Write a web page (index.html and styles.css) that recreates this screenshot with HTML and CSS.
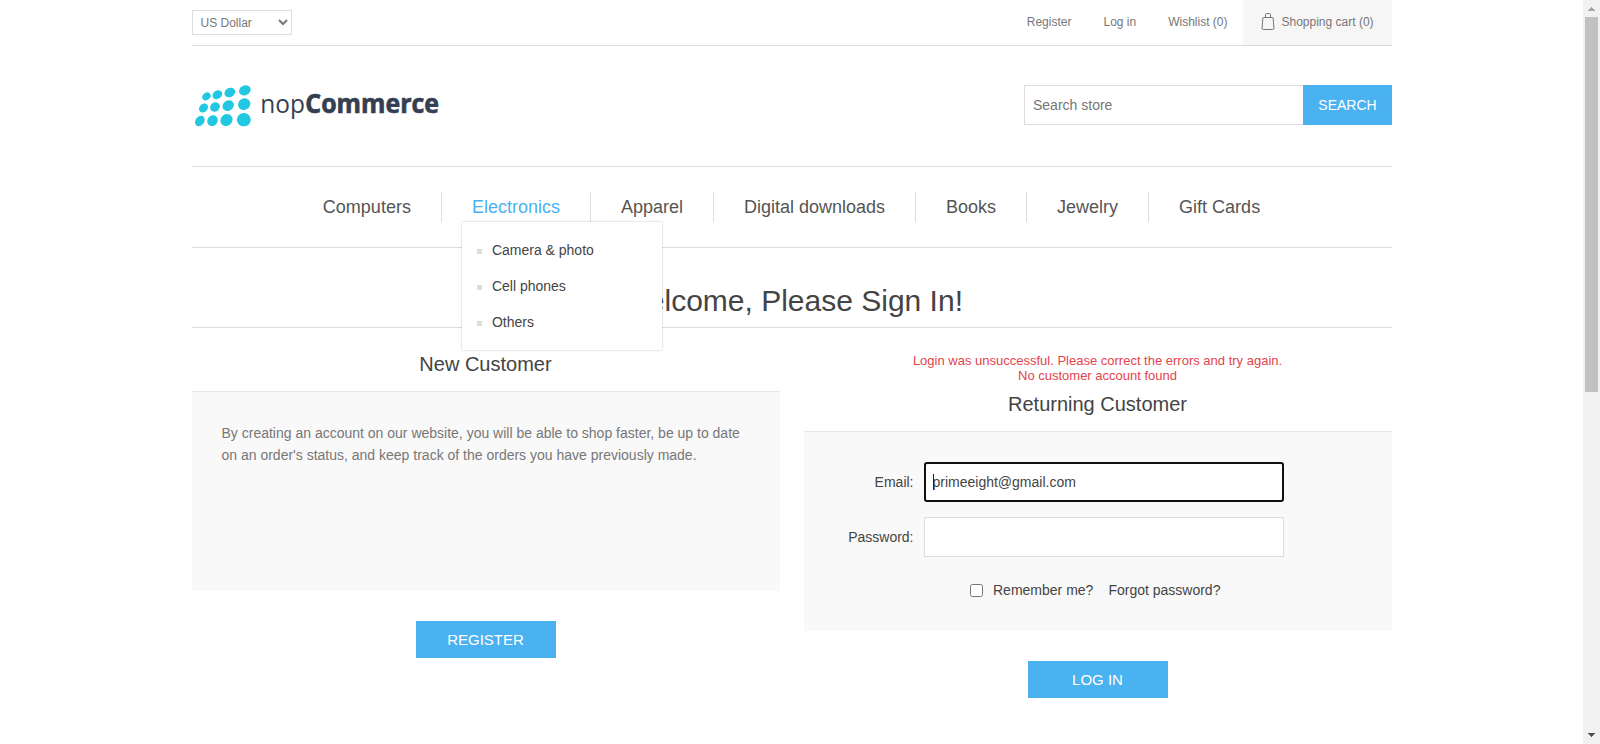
FILE: index.html
```html
<!DOCTYPE html>
<html lang="en">
<head>
<meta charset="utf-8">
<title>nopCommerce demo store. Login</title>
<link rel="stylesheet" href="styles.css">
</head>
<body>
<div class="viewport">
<div class="page">
  <header>
    <div class="header-upper">
      <select class="currency" aria-label="Currency"><option>US Dollar</option><option>Euro</option></select>
      <nav class="header-links">
        <a>Register</a><a>Log in</a><a>Wishlist (0)</a>
        <a class="cart">
          <svg class="bag" width="14" height="17" viewBox="0 0 14 17" fill="none" stroke="#777"><path d="M2.500 4.500h9q.5 0 .6.5l.9 10q.1 1.500-1.300 1.500H2.300q-1.400 0-1.300-1.500L1.900 5q.1-.5.6-.5z"/><path d="M4.500 4.500V1.500q0-1 1-1h3q1 0 1 1v3"/></svg>
          Shopping cart (0)
        </a>
      </nav>
    </div>
    <div class="header-lower">
      <svg class="logo" width="250" height="52" viewBox="0 0 750 156" role="img" aria-label="nopCommerce">
        <g fill="#22c8e2">
          <ellipse cx="43.500" cy="37" rx="13.500" ry="10.500" transform="rotate(-35 43.500 37)"/>
          <ellipse cx="76" cy="32" rx="15.500" ry="12.500" transform="rotate(-35 76 32)"/>
          <ellipse cx="113.500" cy="25.500" rx="17" ry="13.500" transform="rotate(-30 113.500 25.500)"/>
          <ellipse cx="158.500" cy="19" rx="18" ry="14.500" transform="rotate(-25 158.500 19)"/>
          <ellipse cx="34.500" cy="72" rx="15" ry="12" transform="rotate(-45 34.500 72)"/>
          <ellipse cx="69" cy="69" rx="15.500" ry="13.500" transform="rotate(-40 69 69)"/>
          <ellipse cx="108.500" cy="65" rx="18" ry="15" transform="rotate(-35 108.500 65)"/>
          <ellipse cx="156.500" cy="60.500" rx="19" ry="17" transform="rotate(-30 156.500 60.500)"/>
          <ellipse cx="23.500" cy="111" rx="17" ry="13" transform="rotate(-55 23.500 111)"/>
          <ellipse cx="61.500" cy="110" rx="17" ry="15" transform="rotate(-50 61.500 110)"/>
          <ellipse cx="103.500" cy="108" rx="19" ry="17.500" transform="rotate(-45 103.500 108)"/>
          <ellipse cx="155.500" cy="107" rx="21" ry="20"/>
        </g>
        <text class="logo-thin" x="205" y="87" textLength="134" lengthAdjust="spacingAndGlyphs">nop</text>
        <text class="logo-bold" x="340" y="87" textLength="401" lengthAdjust="spacingAndGlyphs">Commerce</text>
      </svg>
      <form class="search">
        <input class="search-text" type="text" placeholder="Search store">
        <button class="search-button" type="button">SEARCH</button>
      </form>
    </div>
  </header>
  <ul class="menu">
    <li><a>Computers</a></li>
    <li class="active"><a>Electronics</a>
      <ul class="sublist">
        <li>Camera &amp; photo</li>
        <li>Cell phones</li>
        <li>Others</li>
      </ul>
    </li>
    <li><a>Apparel</a></li>
    <li><a>Digital downloads</a></li>
    <li><a>Books</a></li>
    <li><a>Jewelry</a></li>
    <li><a>Gift Cards</a></li>
  </ul>
  <main>
    <h1>Welcome, Please Sign In!</h1>
    <div class="columns">
      <section class="block">
        <h2>New Customer</h2>
        <div class="panel intro">By creating an account on our website, you will be able to shop faster, be up to date on an order's status, and keep track of the orders you have previously made.</div>
        <button class="action" type="button">REGISTER</button>
      </section>
      <section class="block">
        <div class="error">Login was unsuccessful. Please correct the errors and try again.<br>No customer account found</div>
        <h2>Returning Customer</h2>
        <div class="panel fields">
          <div class="row"><label for="email">Email:</label><div class="field"><input class="focused" id="email" type="text" value="primeeight@gmail.com"><span class="caret"></span></div></div>
          <div class="row"><label for="password">Password:</label><div class="field"><input id="password" type="password"></div></div>
          <div class="options"><input class="check" id="remember" type="checkbox"><label for="remember">Remember me?</label><a class="forgot">Forgot password?</a></div>
        </div>
        <button class="action" type="button">LOG IN</button>
      </section>
    </div>
  </main>
</div>
<div class="scrollbar">
  <svg class="arrow" width="17" height="17" viewBox="0 0 17 17" fill="#a3a3a3" shape-rendering="crispEdges"><path d="M8 7h1v1h1v1h1v1h1v1H5v-1h1V9h1V8h1z"/></svg>
  <div class="thumb"></div>
  <svg class="arrow" width="17" height="17" viewBox="0 0 17 17" fill="#505050" shape-rendering="crispEdges"><path d="M5 6h7v1h-1v1h-1v1H9v1H8v-1H7V8H6V7H5z"/></svg>
</div>
</div>
</body>
</html>
```
FILE: styles.css
```css
* { box-sizing: border-box; margin: 0; padding: 0; }
body { background: #fff; color: #777; font: 14px "Liberation Sans", Arial, sans-serif; overflow: hidden; }
ul { list-style: none; }
input, select, button { font-family: inherit; border-radius: 0; }

.viewport { display: flex; height: 744px; }
.page { width: 1200px; margin: 0 191.5px; flex: none; }

.header-upper { display: flex; justify-content: space-between; height: 46px; border-bottom: 1px solid #ddd; font-size: 12px; }
.currency { width: 100px; height: 25px; margin-top: 10px; padding: 0 4px; border: 1px solid #ddd; background: #fff; color: #777; font-size: 12px; }
.header-links { display: flex; line-height: 44px; }
.header-links a { margin-right: 32px; }
.header-links a:nth-child(3) { margin-right: 15px; }
.header-links .cart { display: flex; width: 149px; height: 45px; margin: 0; padding-left: 18px; background: #f6f6f6; white-space: nowrap; }
.bag { margin: 12.500px 7px 0 0; }

.header-lower { display: flex; justify-content: space-between; align-items: flex-start; height: 120px; padding-top: 39px; }
.logo { margin-top: -1px; overflow: visible; }
.logo text { font-family: "Open Sans", "Noto Sans", sans-serif; font-size: 79px; fill: #353f52; }
.logo .logo-thin { font-weight: 400; }
.logo .logo-bold { font-weight: 700; stroke: #353f52; stroke-width: 2px; }
.search { display: flex; }
.search-text { width: 279px; height: 40px; padding: 0 8.500px; border: 1px solid #ddd; border-right: 0; font-size: 14px; color: #777; }
.search-text::placeholder { color: #757575; }
.search-button { width: 89px; height: 40px; padding-left: 1px; border: 0; background: #4ab2f1; color: #fff; font-size: 14px; }

.menu { display: flex; justify-content: center; height: 82px; padding-top: 25px; border-top: 1px solid #ddd; border-bottom: 1px solid #ddd; }
.menu > li { position: relative; height: 30px; padding: 0 30px; border-left: 1px solid #ddd; color: #555; font-size: 18px; line-height: 30px; white-space: nowrap; }
.menu > li:first-child { border-left: 0; }
.menu > .active { color: #4ab2f1; }
.sublist { position: absolute; z-index: 2; top: 30px; left: 20px; width: 200px; height: 128px; padding: 10px 0; background: #fff; box-shadow: 0 0 2px rgba(0, 0, 0, .25); color: #444; font-size: 14px; }
.sublist li { display: flex; align-items: center; height: 36px; padding-left: 15px; }
.sublist li::before { content: ""; width: 5px; height: 5px; margin: 3px 10px 0 0; background: #ddd; }

h1 { height: 80px; padding-top: 30px; border-bottom: 1px solid #ddd; color: #444; font-size: 30px; font-weight: 400; line-height: 46px; text-align: center; }
.columns { display: flex; justify-content: space-between; padding-top: 24px; }
.block { width: 588px; text-align: center; }
h2 { height: 39px; color: #444; font-size: 20px; font-weight: 400; line-height: 24px; }
.error { height: 40px; padding-top: 1px; color: #e4434b; font-size: 13px; line-height: 15px; }
.panel { height: 200px; border-top: 1px solid #e6e6e6; background: #f9f9f9; text-align: left; }
.intro { padding: 30px; line-height: 22px; }
.fields { padding-top: 30px; color: #444; }
.row { display: flex; align-items: center; height: 40px; margin-bottom: 15px; }
.row label { width: 110px; margin-right: 10px; text-align: right; }
.field { position: relative; display: flex; }
.field input { width: 360px; height: 40px; padding: 0 8px; border: 1px solid #ddd; background: #fff; color: #444; font-size: 14px; }
.field .focused { padding: 0 7px; border: 2px solid #101010; border-radius: 3px; }
.caret { position: absolute; left: 9px; top: 12px; width: 1px; height: 16px; background: #222; }
.options { display: flex; align-items: center; height: 20px; margin: 23px 0 0 166px; }
.check { width: 13px; height: 13px; margin-right: 10.500px; }
.forgot { margin-left: 15px; }
.action { width: 140px; height: 37px; margin-top: 30px; border: 0; background: #4ab2f1; color: #fff; font-size: 15px; }

.scrollbar { display: flex; flex-direction: column; width: 17px; height: 744px; background: #f1f1f1; }
.arrow { display: block; flex: none; }
.thumb { width: 13px; height: 375px; margin: 0 2px auto; background: #c1c1c1; }
```
